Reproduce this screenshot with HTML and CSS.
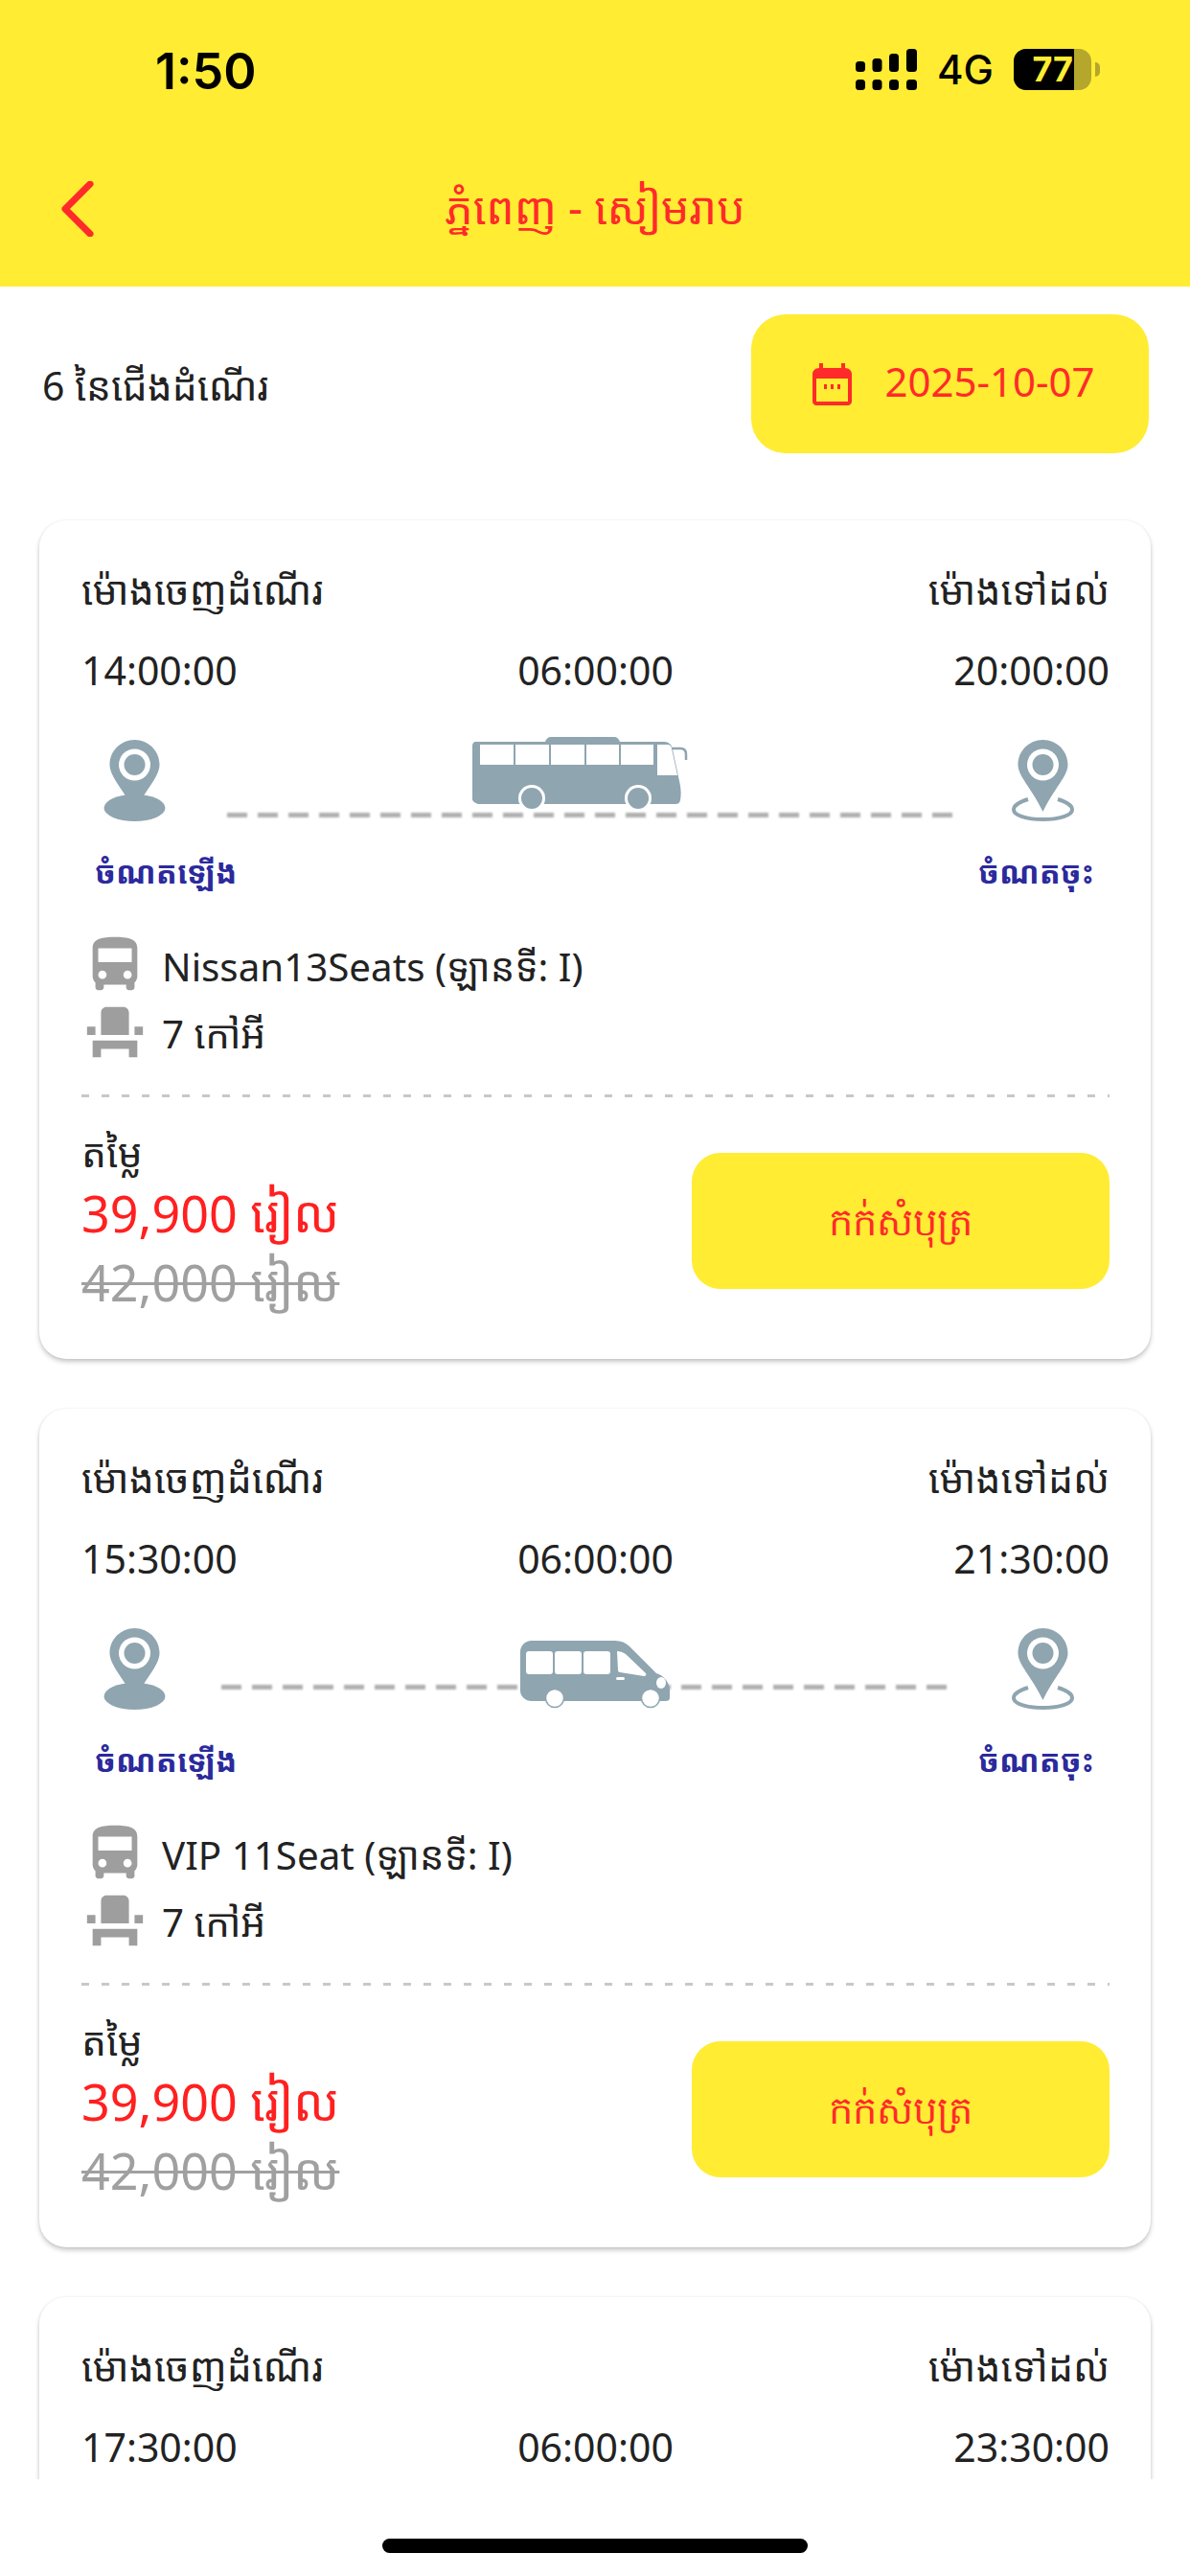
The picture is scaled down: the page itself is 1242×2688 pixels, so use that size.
FILE: index.html
```html
<!DOCTYPE html>
<html lang="km">
<head>
<meta charset="utf-8">
<title>ភ្នំពេញ - សៀមរាប</title>
<link rel="stylesheet" href="styles.css">
</head>
<body>
<svg class="defs" width="0" height="0" aria-hidden="true">
  <symbol id="pin-from" viewBox="0 0 64 85">
    <ellipse cx="32" cy="71" rx="32" ry="14"/>
    <path d="M32 0C17.6 0 6 11.6 6 26c0 12 14 26 26 48 12-22 26-36 26-48C58 11.6 46.4 0 32 0z"/>
    <circle cx="32" cy="26" r="16.5" fill="#fff"/>
    <circle cx="32" cy="26" r="11"/>
  </symbol>
  <symbol id="pin-to" viewBox="0 0 65 85">
    <path d="M17 62C7 65 2 69 2 73c0 5.500 13 10 30.500 10S63 78.500 63 73c0-4-5-8-15-11" fill="none" stroke="#8fa5b0" stroke-width="4"/>
    <path d="M32.500 0C18 0 6.500 11.600 6.500 26c0 12 14 24 26 49 12-25 26-37 26-49C58.500 11.600 47 0 32.500 0z"/>
    <circle cx="32.500" cy="26" r="16.500" fill="#fff"/>
    <circle cx="32.500" cy="26" r="11"/>
  </symbol>
  <symbol id="ic-bus" viewBox="0 0 24 24"><path d="M4 16c0 .88.39 1.67 1 2.220V20c0 .55.45 1 1 1h1c.55 0 1-.45 1-1v-1h8v1c0 .55.45 1 1 1h1c.55 0 1-.45 1-1v-1.780c.61-.55 1-1.340 1-2.220V6c0-3.500-3.580-4-8-4s-8 .5-8 4v10zm3.500 1c-.83 0-1.500-.67-1.500-1.500S6.670 14 7.500 14s1.500.67 1.500 1.500S8.330 17 7.500 17zm9 0c-.83 0-1.500-.67-1.500-1.500s.67-1.500 1.500-1.500 1.500.67 1.500 1.500-.67 1.500-1.500 1.500zm1.500-6H6V6h12v5z"/></symbol>
  <symbol id="ic-seat" viewBox="0 0 24 24"><path d="M4 18v3h3v-3h10v3h3v-6H4zm15-8h3v3h-3zM2 10h3v3H2zm15 3H7V5c0-1.100.9-2 2-2h6c1.100 0 2 .9 2 2v8z"/></symbol>
  <symbol id="coach" viewBox="0 0 225 78">
    <path d="M4 5h72c1-3 3-5 6-5h66c3 0 5 2 6 5h46c5 0 8 3 9 8l7 33c2 8 2 15 1 20-1 3-2 4-5 4H6c-3-1-6-3-6-5V10c0-3 1-5 4-5z"/>
    <path d="M205 12h12c4 0 6 2 6 6v6" fill="none" stroke="#8fa5b0" stroke-width="2.500"/>
    <g fill="#fff">
      <rect x="8" y="8" width="35" height="21"/><rect x="45" y="8" width="35" height="21"/><rect x="82" y="8" width="35" height="21"/><rect x="119" y="8" width="34" height="21"/><rect x="155" y="8" width="34" height="21"/>
      <path d="M193 8h11c2 0 4 2 4 4l6 28h-21z"/>
      <circle cx="62" cy="64" r="14"/><circle cx="173" cy="64" r="14"/>
    </g>
    <circle cx="62" cy="64" r="11"/><circle cx="173" cy="64" r="11"/>
  </symbol>
  <symbol id="van" viewBox="0 0 156 72">
    <path d="M12 1h87c6 0 11 2 15 6l28 28c7 2 13 8 14 17v9c0 2-2 3-4 3H12C5 64 0 59 0 53V13C0 6 5 1 12 1z"/>
    <g fill="#fff">
      <rect x="6" y="12" width="28" height="24" rx="3"/><rect x="36" y="12" width="28" height="24" rx="3"/><rect x="66" y="12" width="28" height="24" rx="3"/>
      <path d="M101 12c3 0 6 1 9 3l21 20c1 2 0 3-2 3l-25-4c-1 0-2-1-2-2z"/>
      <rect x="100" y="39" width="9" height="3" rx="1.500"/>
      <ellipse cx="147" cy="45" rx="5" ry="6"/>
      <circle cx="36" cy="61" r="9.500" stroke="#8fa5b0" stroke-width="1.500"/><circle cx="136" cy="61" r="9.500" stroke="#8fa5b0" stroke-width="1.500"/>
    </g>
  </symbol>
</svg>

<header class="top">
  <div class="status">
    <span class="clock">1:50</span>
    <div class="status-right">
      <svg class="signal" viewBox="0 0 64 43" aria-hidden="true">
        <rect x="0" y="13" width="10" height="11" rx="3.500"/><rect x="17.500" y="10" width="10" height="14" rx="3.500"/><rect x="35" y="5" width="10" height="19" rx="3.500"/><rect x="53" y="0" width="11" height="24" rx="3.500"/>
        <rect x="0" y="32" width="10" height="11" rx="3.500"/><rect x="17.500" y="32" width="10" height="11" rx="3.500"/><rect x="35" y="32" width="10" height="11" rx="3.500"/><rect x="53" y="32" width="11" height="11" rx="3.500"/>
      </svg>
      <span class="net">4G</span>
      <div class="battery"><span class="level">77</span></div>
    </div>
  </div>
  <div class="appbar">
    <svg class="back" viewBox="0 0 36 58" aria-hidden="true"><path d="M31 3 5 29l26 26"/></svg>
    <h1 class="title">ភ្នំពេញ - សៀមរាប</h1>
  </div>
</header>

<main class="list">
  <div class="summary">
    <span class="count">6 នៃជើងដំណើរ</span>
    <button class="date">
      <svg class="cal" viewBox="0 0 41 44" aria-hidden="true">
        <path fill-rule="evenodd" d="M7 0h4v5h19V0h4v5c4 0 7 3 7 6v29c0 2-2 4-4 4H4c-2 0-4-2-4-4V11c0-3 3-6 7-6zM4 16v24h33V16z"/>
        <rect x="12" y="22" width="3" height="5"/><rect x="19" y="22" width="3" height="5"/><rect x="26" y="22" width="3" height="5"/>
      </svg>
      <span class="date-text">2025-10-07</span>
    </button>
  </div>

  <article class="card">
    <div class="triple"><span>ម៉ោងចេញដំណើរ</span><span></span><span class="end">ម៉ោងទៅដល់</span></div>
    <div class="triple times"><span>14:00:00</span><span>06:00:00</span><span class="end">20:00:00</span></div>
    <div class="route">
      <i class="dash"></i>
      <svg class="pin"><use href="#pin-from"/></svg>
      <svg class="coach"><use href="#coach"/></svg>
      <svg class="pin"><use href="#pin-to"/></svg>
    </div>
    <div class="stops"><span>ចំណតឡើង</span><span>ចំណតចុះ</span></div>
    <div class="info"><svg class="ic"><use href="#ic-bus"/></svg><span>Nissan13Seats (ឡានទី: I)</span></div>
    <div class="info second"><svg class="ic"><use href="#ic-seat"/></svg><span>7 កៅអី</span></div>
    <div class="foot">
      <div class="prices">
        <div class="plabel">តម្លៃ</div>
        <div class="now">39,900 រៀល</div>
        <div class="was">42,000 រៀល</div>
      </div>
      <button class="book">កក់សំបុត្រ</button>
    </div>
  </article>

  <article class="card">
    <div class="triple"><span>ម៉ោងចេញដំណើរ</span><span></span><span class="end">ម៉ោងទៅដល់</span></div>
    <div class="triple times"><span>15:30:00</span><span>06:00:00</span><span class="end">21:30:00</span></div>
    <div class="route">
      <i class="dash dash-van"></i>
      <svg class="pin"><use href="#pin-from"/></svg>
      <svg class="vanic"><use href="#van"/></svg>
      <svg class="pin"><use href="#pin-to"/></svg>
    </div>
    <div class="stops"><span>ចំណតឡើង</span><span>ចំណតចុះ</span></div>
    <div class="info"><svg class="ic"><use href="#ic-bus"/></svg><span>VIP 11Seat (ឡានទី: I)</span></div>
    <div class="info second"><svg class="ic"><use href="#ic-seat"/></svg><span>7 កៅអី</span></div>
    <div class="foot">
      <div class="prices">
        <div class="plabel">តម្លៃ</div>
        <div class="now">39,900 រៀល</div>
        <div class="was">42,000 រៀល</div>
      </div>
      <button class="book">កក់សំបុត្រ</button>
    </div>
  </article>

  <article class="card">
    <div class="triple"><span>ម៉ោងចេញដំណើរ</span><span></span><span class="end">ម៉ោងទៅដល់</span></div>
    <div class="triple times"><span>17:30:00</span><span>06:00:00</span><span class="end">23:30:00</span></div>
  </article>
</main>

<footer class="home"><i class="indicator"></i></footer>
</body>
</html>
```
FILE: styles.css
```css
* { box-sizing: border-box; }
html, body { margin: 0; padding: 0; }
body {
  width: 1242px;
  height: 2688px;
  overflow: hidden;
  background: #fff;
  color: #222;
  font-family: "Noto Sans", "Noto Sans Khmer", "Khmer OS", "DejaVu Sans", sans-serif;
  font-size: 41px;
  line-height: 56px;
  display: flex;
  flex-direction: column;
}
.defs { position: absolute; }
.pin, .coach, .vanic { fill: #8fa5b0; }

.top { height: 299px; background: #ffec33; flex: none; }
.status { height: 150px; display: flex; align-items: flex-start; justify-content: space-between; padding: 51px 103px 0 162px; }
.clock { font-family: Inter, "Liberation Sans", sans-serif; font-weight: 600; font-size: 52px; line-height: 48px; color: #000; }
.status-right { display: flex; align-items: flex-start; }
.signal { width: 64px; height: 43px; fill: #000; }
.net { font-family: Inter, "Liberation Sans", sans-serif; font-size: 42px; font-weight: 500; line-height: 48px; color: #000; margin: -2px 0 0 21px; }
.battery { position: relative; width: 81px; height: 43px; margin-left: 21px; border-radius: 13px; background: #b5a62c; }
.battery::after { content: ""; position: absolute; left: 85px; top: 14px; width: 5px; height: 15px; border-radius: 0 8px 8px 0; background: #b5a62c; }
.level { display: block; width: 63px; height: 43px; padding-right: 1px; background: #000; border-radius: 13px 0 0 13px; color: #ffec33; font-family: Inter, "Liberation Sans", sans-serif; font-weight: 700; font-size: 36px; line-height: 43px; text-align: right; }

.appbar { position: relative; height: 149px; display: flex; justify-content: center; }
.back { position: absolute; left: 63px; top: 39px; width: 36px; height: 58px; fill: none; stroke: #ff2a2a; stroke-width: 7px; stroke-linecap: round; stroke-linejoin: round; }
.title { margin: 36px 0 0; font-size: 46.5px; line-height: 60px; font-weight: 400; color: #ff2a2a; }

.list { height: 2288px; flex: none; overflow: hidden; }
.summary { height: 244px; display: flex; align-items: flex-start; justify-content: space-between; padding: 29px 43px 0 44px; }
.count { margin-top: 46px; }
.date { width: 415px; height: 145px; border: 0; border-radius: 36px; background: #ffec33; color: #ff2a2a; display: flex; align-items: center; justify-content: center; gap: 34px; padding: 0 0 0 8px; font: 42px/56px "Noto Sans", sans-serif; }
.date-text { position: relative; top: -3px; }
.cal { width: 41px; height: 44px; fill: #ff2a2a; }

.card { height: 875px; margin: 0 41px 52px; padding: 44px 43px 0 44px; background: #fff; border-radius: 28px; box-shadow: 0 3px 5px rgba(0,0,0,.22), 0 0 3px rgba(0,0,0,.06); }
.triple { display: grid; grid-template-columns: 1fr auto 1fr; }
.end { text-align: right; }
.times { margin-top: 28px; }

.route { position: relative; height: 90px; margin-top: 42px; padding: 3px 37px 0 23px; display: flex; justify-content: space-between; align-items: flex-start; }
.dash { position: absolute; left: 152px; top: 79px; width: 762px; height: 5px; background: repeating-linear-gradient(90deg, #b0b0b0 0 21px, transparent 21px 32px); filter: blur(.8px); }
.dash-van { left: 146px; top: 62px; }
.pin { position: relative; width: 65px; height: 85px; }
.coach { position: relative; width: 225px; height: 78px; margin: -3px 0 0 -18px; }
.vanic { position: relative; width: 156px; height: 72px; margin: 12px 0 0 12px; }

.stops { display: flex; justify-content: space-between; margin-top: 29px; padding: 0 16px 0 14px; font-size: 32.5px; line-height: 44px; font-weight: 700; color: #2b2a9c; }
.info { display: flex; align-items: center; height: 56px; margin-top: 49px; font-size: 40.3px; }
.info.second { margin-top: 14px; }
.ic { width: 70px; height: 70px; flex: none; margin: -4px 14px 0 0; fill: #9e9e9e; }

.foot { display: flex; justify-content: space-between; align-items: flex-start; margin-top: 35px; padding-top: 32px; background: repeating-linear-gradient(90deg, #c8c8c8 0 8px, transparent 8px 21px) left top / 100% 3px no-repeat; }
.plabel { height: 56px; }
.now, .was { font-size: 52px; line-height: 72px; }
.now { color: #ff2020; }
.was { color: #a0a0a0; text-decoration: line-through; text-decoration-thickness: 3px; }
.book { width: 436px; height: 142px; margin-top: 29px; border: 0; border-radius: 30px; background: #ffec33; color: #ff2a2a; font: 40px/56px "Noto Sans", sans-serif; padding: 0; }

.home { position: relative; flex: 1; background: #fff; }
.indicator { position: absolute; left: 399px; top: 62px; width: 444px; height: 15px; border-radius: 8px; background: #000; }
```
